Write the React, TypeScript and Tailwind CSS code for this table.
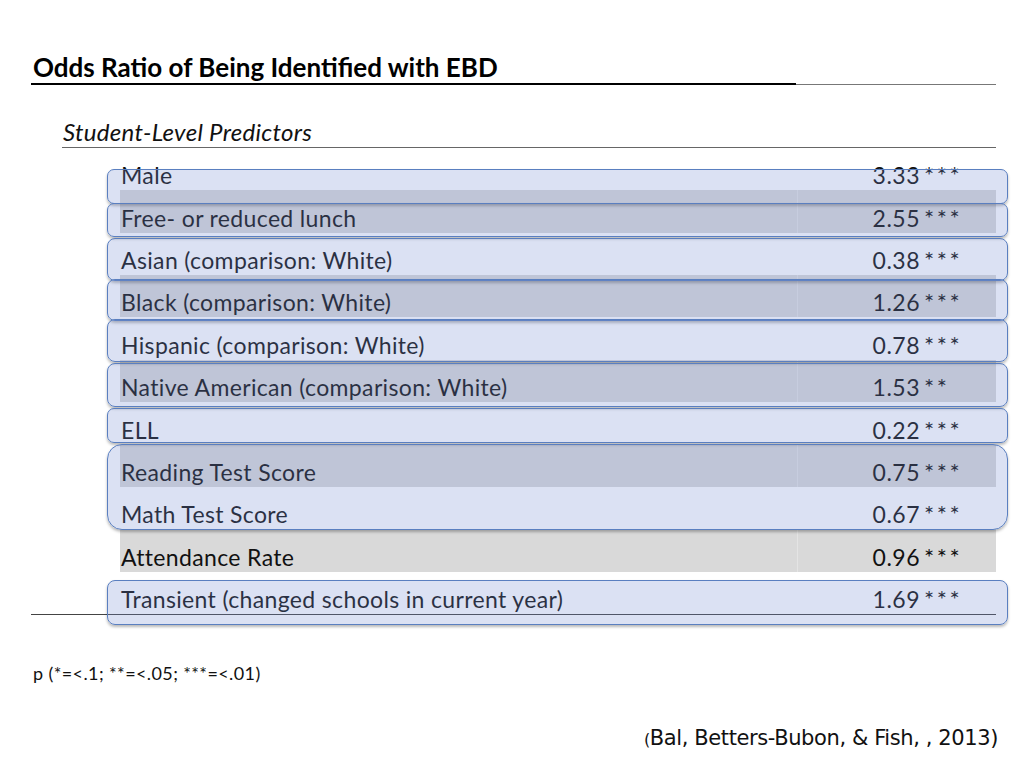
import React from 'react';

interface Row {
  label: string;
  value: string;
  stars: string;
}

const rows: Row[] = [
  { label: 'Male', value: '3.33', stars: '***' },
  { label: 'Free- or reduced lunch', value: '2.55', stars: '***' },
  { label: 'Asian (comparison: White)', value: '0.38', stars: '***' },
  { label: 'Black (comparison: White)', value: '1.26', stars: '***' },
  { label: 'Hispanic (comparison: White)', value: '0.78', stars: '***' },
  { label: 'Native American (comparison: White)', value: '1.53', stars: '**' },
  { label: 'ELL', value: '0.22', stars: '***' },
  { label: 'Reading Test Score', value: '0.75', stars: '***' },
  { label: 'Math Test Score', value: '0.67', stars: '***' },
  { label: 'Attendance Rate', value: '0.96', stars: '***' },
  { label: 'Transient (changed schools in current year)', value: '1.69', stars: '***' },
];

// highlight shapes drawn over the table: top and height relative to table top
const highlights = [
  { top: 21, h: 35, r: 'rounded-[7px]' },
  { top: 55, h: 34, r: 'rounded-[7px]' },
  { top: 90, h: 43, r: 'rounded-[8px]' },
  { top: 131, h: 42, r: 'rounded-[8px]' },
  { top: 171, h: 43, r: 'rounded-[8px]' },
  { top: 215, h: 44, r: 'rounded-[8px]' },
  { top: 260, h: 35, r: 'rounded-[7px]' },
  { top: 296, h: 86, r: 'rounded-[15px]' },
  { top: 432, h: 45, r: 'rounded-[8px]' },
];

export default function App() {
  return (
    <div className="relative w-[1024px] h-[768px] bg-white overflow-hidden text-[#111] font-['Lato','Liberation_Sans',sans-serif]">
      {/* Title */}
      <div className="pt-[52px] pl-[33px]">
        <h1 className="text-[26px] leading-[30px] font-bold text-black">Odds Ratio of Being Identified with EBD</h1>
      </div>
      <div className="flex items-center ml-[31px] w-[965px] mt-[1px]">
        <div className="w-[765px] h-[2px] bg-black" />
        <div className="flex-1 h-px bg-[#777]" />
      </div>

      {/* Subtitle */}
      <div className="pl-[63px] mt-[33px]">
        <h2 className="text-[24px] leading-[27px] italic tracking-[0.3px]">Student-Level Predictors</h2>
      </div>
      <div className="ml-[62px] w-[934px] h-px bg-[#666] mt-[2px]" />

      {/* Table */}
      <div className="relative ml-[120px] w-[876px]">
        {rows.map((row, i) => (
          <div
            key={row.label}
            className={`flex h-[42.36px] text-[23px] leading-none tracking-[0.35px] ${i % 2 === 1 ? 'bg-[#d9d9d9]' : ''}`}
          >
            <div className="w-[677px] flex items-end pb-[3px] pl-[1px]">{row.label}</div>
            <div className={`flex-1 flex items-end pb-[3px] ${i % 2 === 1 ? 'border-l border-[#e4e4e4]' : 'border-l border-transparent'}`}>
              <span className="w-[122px] text-right tracking-[0.5px]">{row.value}</span>
              <span className="pl-[4px] text-[24px] tracking-[2.5px]">{row.stars}</span>
            </div>
          </div>
        ))}

        {highlights.map((b, i) => (
          <div
            key={i}
            className={`absolute left-[-13px] w-[901px] border-[1.5px] border-[#5a7fc0] bg-[rgba(114,141,209,0.26)] shadow-[0_2px_3px_rgba(0,0,0,0.28)] ${b.r}`}
            style={{ top: b.top, height: b.h }}
          />
        ))}
      </div>
      <div className="ml-[31px] w-[965px] h-px bg-[#444]" />

      {/* Footnote */}
      <p className="pl-[33px] mt-[48px] text-[18px] leading-[20px] tracking-[0.4px]">p (*=&lt;.1; **=&lt;.05; ***=&lt;.01)</p>

      {/* Citation */}
      <div className="flex justify-end pr-[26px] mt-[42px]">
        <p className="text-[21px] leading-[26px] tracking-[-0.4px] font-['DejaVu_Sans',sans-serif]">
          <span className="text-[16px]">(</span>Bal, Betters-Bubon, &amp; Fish, , 2013)
        </p>
      </div>
    </div>
  );
}
